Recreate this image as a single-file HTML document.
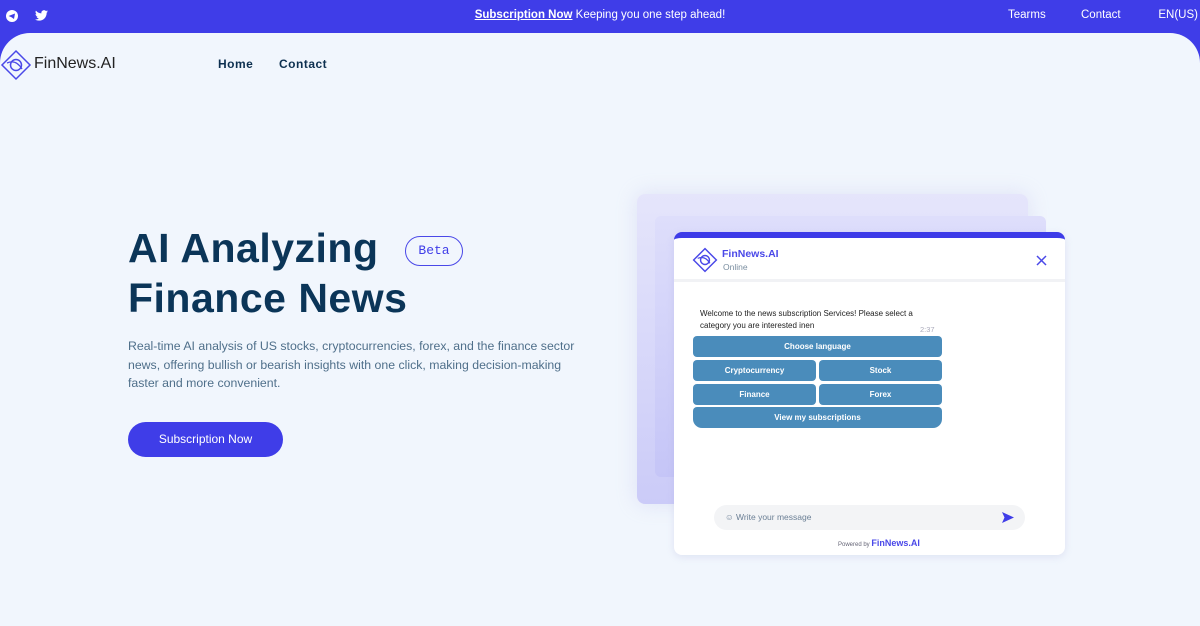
<!DOCTYPE html>
<html><head><meta charset="utf-8"><style>
*{margin:0;padding:0;box-sizing:border-box}
body{width:1200px;height:626px;overflow:hidden;background:#3f3de8;font-family:"Liberation Sans",sans-serif;position:relative}
.top{height:33px;color:#fff;font-size:12px;position:relative}
.top .c{position:absolute;left:0;right:0;top:9px;text-align:center;font-size:11.5px}
.top .c b{text-decoration:underline}
.top .r{position:absolute;top:9px;font-size:11.5px}
.main{position:absolute;top:33px;left:0;width:1200px;height:593px;background:#f1f6fd;border-radius:30px 30px 0 0}
.abs{position:absolute}
.nav{font-size:12px;font-weight:bold;color:#0d3050;letter-spacing:.5px}
h1{position:absolute;left:128px;top:190px;font-size:41px;line-height:50px;color:#0b3558;font-weight:bold;letter-spacing:.5px}
.beta{position:absolute;left:405px;top:203px;width:58px;height:30px;border:1px solid #4a48e8;border-radius:15px;color:#3f3de8;font-size:13px;text-align:center;line-height:28px;font-family:"Liberation Mono",monospace}
.p{position:absolute;left:128px;top:304px;width:458px;font-size:12.3px;line-height:18.5px;color:#4f6f8a}
.btn{position:absolute;left:128px;top:389px;width:155px;height:35px;border-radius:18px;background:#3f3de8;color:#fff;font-size:12px;text-align:center;line-height:35px}
.l1{left:637px;top:161px;width:391px;height:310px;border-radius:8px;background:linear-gradient(#e5e5fb,#cbcbf8);box-shadow:0 0 20px rgba(180,180,230,.3)}
.l2{left:655px;top:183px;width:391px;height:261px;border-radius:6px;background:linear-gradient(#dedefb,#c5c5f7)}
.card{left:674px;top:199px;width:391px;height:323px;background:#fff;border-radius:8px;border-top:6px solid #3d3be8;box-shadow:0 2px 8px rgba(150,150,200,.2);overflow:hidden}
.hd{height:44px;border-bottom:3px solid #f1f2f5}
.b{position:absolute;background:#4a8cbb;color:#fff;font-size:8px;font-weight:bold;text-align:center;height:21px;line-height:21px;border-radius:4px}
</style></head><body>
<div class="top">
<svg class="abs" style="left:6px;top:10px" width="12" height="12" viewBox="0 0 12 12"><circle cx="6" cy="6" r="6" fill="#fff"/><path d="M2.5 6 L9 3.5 L8 9 L5.5 7.3 Z" fill="#3f3de8"/></svg>
<svg class="abs" style="left:35px;top:10px" width="13" height="11" viewBox="0 0 24 20"><path d="M24 2.4a10 10 0 0 1-2.8.8A5 5 0 0 0 23.3.5a10 10 0 0 1-3.1 1.2A4.9 4.9 0 0 0 11.8 6 14 14 0 0 1 1.7 1a4.9 4.9 0 0 0 1.5 6.6 5 5 0 0 1-2.2-.6 4.9 4.9 0 0 0 3.9 4.8 5 5 0 0 1-2.2.1 4.9 4.9 0 0 0 4.6 3.4A9.9 9.9 0 0 1 0 17.3 14 14 0 0 0 7.5 19.5c9 0 14-7.5 14-14v-.6A10 10 0 0 0 24 2.4z" fill="#fff"/></svg>
<div class="c"><b>Subscription Now</b> Keeping you one step ahead!</div>
<div class="r" style="left:1008px">Tearms</div>
<div class="r" style="left:1081px">Contact</div>
<div class="r" style="right:2px">EN(US)</div>
</div>
<div class="main">
<svg class="abs" style="left:0;top:16px" width="32" height="32" viewBox="0 0 32 32"><path d="M16 2 L30 16 L16 30 L2 16 Z" fill="none" stroke="#4a48e8" stroke-width="1.5"/><circle cx="16" cy="16" r="5.5" fill="none" stroke="#4a48e8" stroke-width="1.5"/><path d="M7 14 Q16 10 22 20" fill="none" stroke="#4a48e8" stroke-width="1.3"/></svg>
<div class="abs" style="left:34px;top:22px;font-size:16px;color:#222">FinNews.AI</div>
<div class="abs nav" style="left:218px;top:24px">Home</div>
<div class="abs nav" style="left:279px;top:24px">Contact</div>
<h1>AI Analyzing<br>Finance News</h1>
<div class="beta">Beta</div>
<div class="p">Real-time AI analysis of US stocks, cryptocurrencies, forex, and the finance sector news, offering bullish or bearish insights with one click, making decision-making faster and more convenient.</div>
<div class="btn">Subscription Now</div>
<div class="abs l1"></div>
<div class="abs l2"></div>
<div class="abs card">
<div class="hd" style="position:relative">
<svg class="abs" style="left:18px;top:9px" width="26" height="26" viewBox="0 0 32 32"><path d="M16 2 L30 16 L16 30 L2 16 Z" fill="none" stroke="#4a48e8" stroke-width="1.8"/><circle cx="16" cy="16" r="5.5" fill="none" stroke="#4a48e8" stroke-width="1.8"/><path d="M7 14 Q16 10 22 20" fill="none" stroke="#4a48e8" stroke-width="1.5"/></svg>
<div class="abs" style="left:48px;top:10px;font-size:10.5px;font-weight:bold;color:#4a48e8">FinNews.AI</div>
<div class="abs" style="left:49px;top:24px;font-size:8.5px;color:#7a8ea0">Online</div>
<svg class="abs" style="left:362px;top:17px" width="11" height="11" viewBox="0 0 11 11"><path d="M1 1 L10 10 M10 1 L1 10" stroke="#4a48e8" stroke-width="1.5"/></svg>
</div>
<div class="abs" style="left:26px;top:70px;font-size:8px;line-height:11.5px;color:#222;width:230px">Welcome to the news subscription Services! Please select a category you are interested inen</div>
<div class="abs" style="left:246px;top:87px;font-size:7.5px;color:#aab">2:37</div>
<div class="b" style="left:19px;top:98px;width:249px">Choose language</div>
<div class="b" style="left:19px;top:122px;width:123px">Cryptocurrency</div>
<div class="b" style="left:145px;top:122px;width:123px">Stock</div>
<div class="b" style="left:19px;top:146px;width:123px">Finance</div>
<div class="b" style="left:145px;top:146px;width:123px">Forex</div>
<div class="b" style="left:19px;top:169px;width:249px;border-radius:4px 4px 9px 9px">View my subscriptions</div>
<div class="abs" style="left:40px;top:267px;width:311px;height:25px;border-radius:13px;background:#f3f4f6"></div>
<div class="abs" style="left:51px;top:274px;font-size:8.5px;color:#6b7f95">☺ Write your message</div>
<svg class="abs" style="left:328px;top:274px" width="12" height="11" viewBox="0 0 12 11"><path d="M0 0 L12 5.5 L0 11 L2.5 5.5 Z" fill="#3f3de8"/></svg>
<div class="abs" style="left:164px;top:300px;font-size:6px;color:#667">Powered by <span style="font-size:9px;color:#4a48e8;font-weight:bold">FinNews.AI</span></div>
</div>
</div>
</body></html>
